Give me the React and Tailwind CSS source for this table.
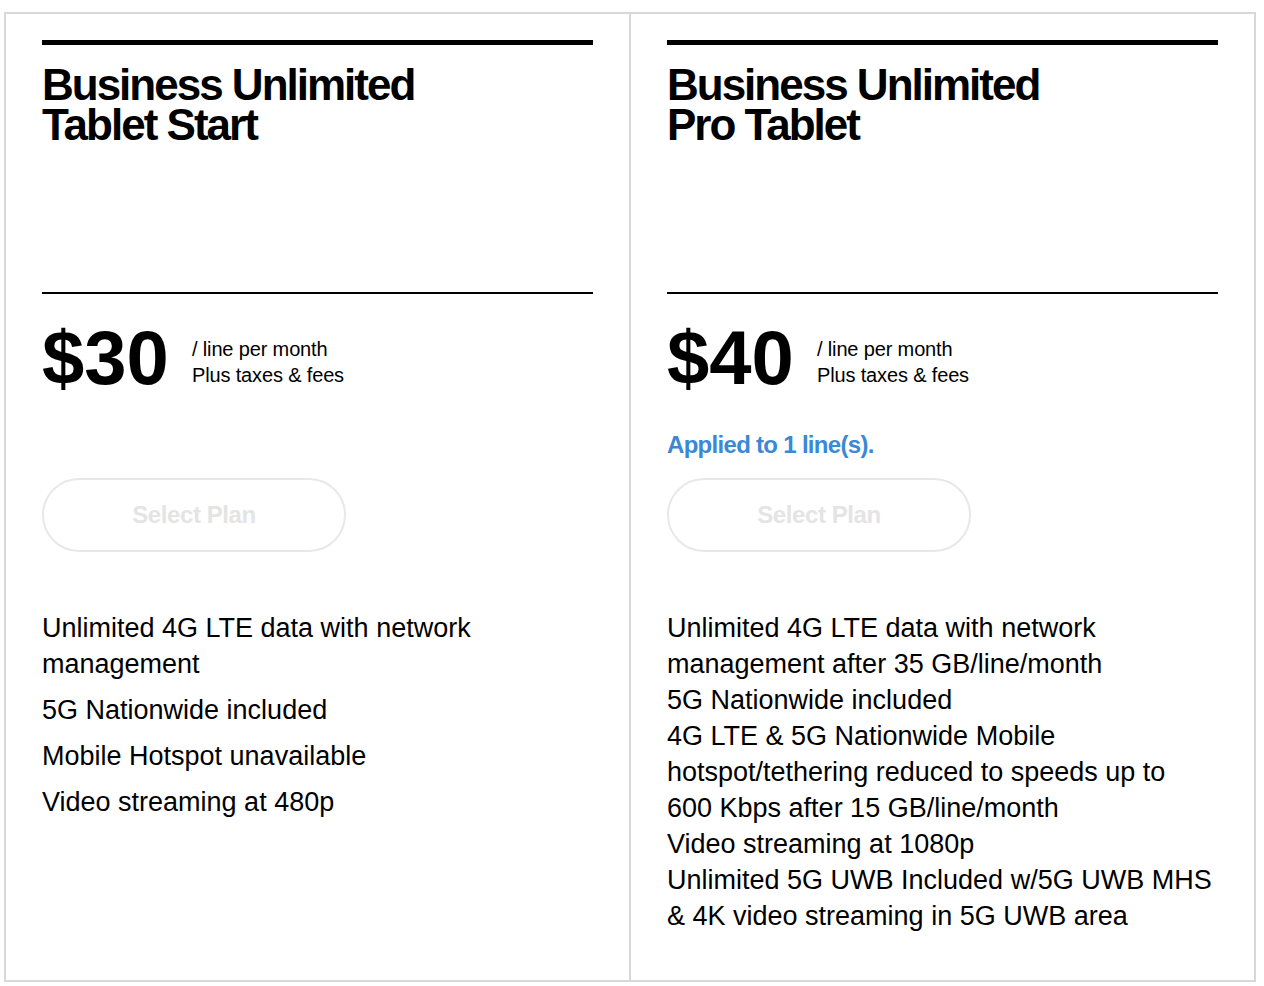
export default function App() {
  const font = { fontFamily: '"Liberation Sans", Arial, sans-serif' };
  const cards = [
    {
      title: ["Business Unlimited", "Tablet Start"],
      price: "$30",
      applied: null,
      features: [
        "Unlimited 4G LTE data with network management",
        "5G Nationwide included",
        "Mobile Hotspot unavailable",
        "Video streaming at 480p",
      ],
      gap: "gap-[10px]",
    },
    {
      title: ["Business Unlimited", "Pro Tablet"],
      price: "$40",
      applied: "Applied to 1 line(s).",
      features: [
        "Unlimited 4G LTE data with network management after 35 GB/line/month",
        "5G Nationwide included",
        "4G LTE & 5G Nationwide Mobile hotspot/tethering reduced to speeds up to 600 Kbps after 15 GB/line/month",
        "Video streaming at 1080p",
        "Unlimited 5G UWB Included w/5G UWB MHS & 4K video streaming in 5G UWB area",
      ],
      gap: "gap-0",
    },
  ];
  return (
    <div className="bg-white min-h-[986px] pt-[12px] pl-[4px]" style={font}>
      <div className="flex w-[1252px] h-[970px] border-2 border-[#d8d8d8]">
        {cards.map((c, i) => (
          <div
            key={i}
            className={`flex-1 flex flex-col px-[36px] pt-[26px] ${i === 0 ? "border-r-2 border-[#d8d8d8]" : ""}`}
          >
            <div className="h-[5px] bg-black" />
            <div className="h-[249px] pt-[20px] border-b-2 border-black">
              <h2 className="text-[44px] leading-[40px] font-bold tracking-[-2px] text-black">
                <span className="block">{c.title[0]}</span>
                <span className="block">{c.title[1]}</span>
              </h2>
            </div>
            <div className="flex items-start mt-[26px]">
              <div className="text-[76px] leading-[76px] font-bold tracking-[0px] text-black w-[150px]">
                {c.price}
              </div>
              <div className="pt-[16px] text-[20px] leading-[26px] tracking-[-0.15px] text-black">
                / line per month
                <br />
                Plus taxes &amp; fees
              </div>
            </div>
            <div className="h-[82px] pt-[33px]">
              {c.applied && (
                <div className="text-[24px] leading-[32px] font-bold tracking-[-0.7px] text-[#3b88d6]">
                  {c.applied}
                </div>
              )}
            </div>
            <button className="w-[304px] h-[74px] rounded-full border-2 border-[#e8e8e8] text-[24px] font-bold tracking-[-0.4px] text-[#e4e4e4] bg-white">
              Select Plan
            </button>
            <div className={`mt-[58px] flex flex-col ${c.gap} text-[27px] leading-[36px] tracking-[0px] text-black pr-[4px]`}>
              {c.features.map((f, j) => (
                <div key={j}>{f}</div>
              ))}
            </div>
          </div>
        ))}
      </div>
    </div>
  );
}
